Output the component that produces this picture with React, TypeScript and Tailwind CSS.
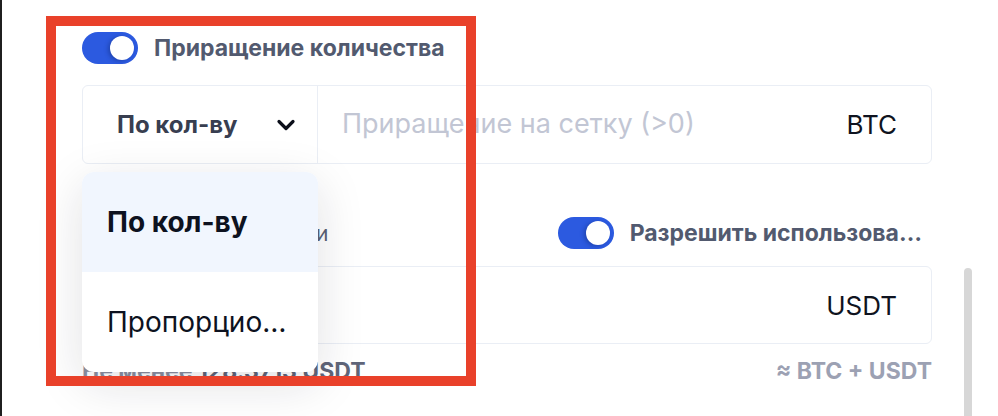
import React from "react";

function Toggle() {
  return (
    <div className="flex h-[32px] w-[56px] shrink-0 items-center justify-end rounded-full bg-[#2c5ae0] pr-[4px]">
      <div className="size-[24px] rounded-full bg-white shadow-[-2px_1px_4px_rgba(10,30,90,0.35)]" />
    </div>
  );
}

function Chevron() {
  return (
    <svg width="20" height="14" viewBox="0 0 20 14" fill="none">
      <path
        d="M3 3.5 10 10.5 17 3.5"
        stroke="#0b0f1a"
        strokeWidth="3.2"
        strokeLinecap="round"
        strokeLinejoin="round"
      />
    </svg>
  );
}

export default function App() {
  return (
    <div
      className="relative h-[416px] w-[998px] overflow-hidden border-l-2 border-[#1f1f1f] bg-white"
      style={{ fontFamily: "Inter, 'Noto Sans', sans-serif" }}
    >
      <div className="flex w-[930px] flex-col pl-[80px] pt-[32px]">
        <div className="flex items-center gap-[16px]">
          <Toggle />
          <span className="text-[23px] font-bold leading-none text-[#525a6f]">
            Приращение количества
          </span>
        </div>

        <div className="mt-[21px] flex h-[79px] rounded-md border border-[#eaeef5]">
          <div className="flex w-[235px] items-center justify-between border-r border-[#eaeef5] pl-[34px] pr-[21px]">
            <span className="text-[24px] font-bold text-[#383e50]">По кол-ву</span>
            <Chevron />
          </div>
          <div className="flex flex-1 items-center justify-between pl-[24px] pr-[34px]">
            <span className="text-[27px] text-[#c2c6d4]">Приращение на сетку (&gt;0)</span>
            <span className="text-[26px] text-[#0f1320]">BTC</span>
          </div>
        </div>

        <div className="mt-[53px] flex h-[32px] items-center justify-between">
          <span className="text-[21.5px] text-[#5a6075]">Сумма для инвестиции</span>
          <div className="mr-[10px] flex items-center gap-[16px]">
            <Toggle />
            <span className="whitespace-nowrap text-[23px] font-bold leading-[32px] text-[#525a6f]">
              Разрешить использова…
            </span>
          </div>
        </div>

        <div className="mt-[17px] flex h-[78px] items-center justify-end rounded-md border border-[#eaeef5] pr-[34px]">
          <span className="text-[26px] text-[#0f1320]">USDT</span>
        </div>

        <div className="mt-[16px] flex items-center justify-between text-[23px] font-bold leading-none">
          <span className="text-[#5f6579]">
            <span className="text-[#8a8fa1]">Не менее</span> 128.3713 USDT
          </span>
          <span className="text-[#9ca1b3]">≈ BTC + USDT</span>
        </div>
      </div>

      <div className="absolute left-[80px] top-[172px] flex h-[200px] w-[236px] flex-col overflow-hidden rounded-xl bg-white shadow-[0_12px_48px_rgba(20,25,40,0.13)]">
        <div className="flex h-[100px] items-center bg-[#f1f6fe] pl-[25px] text-[28px] font-bold text-[#0d1220]">
          По кол-ву
        </div>
        <div className="flex h-[100px] items-center pl-[25px] text-[28px] text-[#0d1220]">
          Пропорцио…
        </div>
      </div>

      <div className="absolute right-[26px] top-[268px] h-[160px] w-[8px] rounded-full bg-[#d7d7d7]" />

      <div className="pointer-events-none absolute left-[44px] top-[16px] h-[370px] w-[430px] border-[10px] border-[#e9412a]" />
    </div>
  );
}
